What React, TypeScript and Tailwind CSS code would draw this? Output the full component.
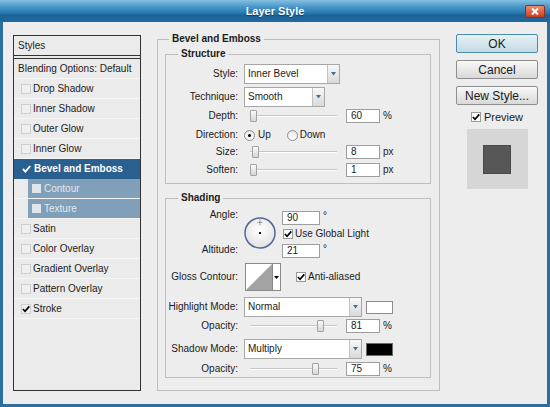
import React from 'react'

type Effect = { name: string; checked?: boolean; selected?: boolean; sub?: boolean }

const EFFECTS: Effect[] = [
  { name: 'Drop Shadow' },
  { name: 'Inner Shadow' },
  { name: 'Outer Glow' },
  { name: 'Inner Glow' },
  { name: 'Bevel and Emboss', checked: true, selected: true },
  { name: 'Contour', sub: true },
  { name: 'Texture', sub: true },
  { name: 'Satin' },
  { name: 'Color Overlay' },
  { name: 'Gradient Overlay' },
  { name: 'Pattern Overlay' },
  { name: 'Stroke', checked: true },
]

function Tick({ color = '#000' }: { color?: string }) {
  return (
    <svg width="9" height="8" viewBox="0 0 9 8">
      <path d="M1 4 L3.4 6.6 L8.2 1" fill="none" stroke={color} strokeWidth="1.9" />
    </svg>
  )
}

function Box({ checked }: { checked?: boolean }) {
  return (
    <span className="flex h-[10px] w-[10px] shrink-0 items-center justify-center border border-[#9a9a9a] bg-white">
      {checked && <Tick />}
    </span>
  )
}

function Arrow() {
  return (
    <svg width="5" height="4" viewBox="0 0 5 4">
      <path d="M0 0 H5 L2.5 3.5 Z" fill="#3f7390" />
    </svg>
  )
}

function Select({ value, width }: { value: string; width: string }) {
  return (
    <div className={`flex h-[20px] border border-[#a7a7a7] bg-white ${width}`}>
      <span className="flex-1 pl-[3px] leading-[18px]">{value}</span>
      <span className="flex w-[12px] items-center justify-center border-l border-[#c2c2c2] bg-gradient-to-b from-[#f8f8f8] to-[#d9d9d9]">
        <Arrow />
      </span>
    </div>
  )
}

function Field({ value, width = 'w-[34px]' }: { value: string; width?: string }) {
  return (
    <div className={`h-[14px] border border-[#9d9d9d] bg-white pl-[4px] leading-[12px] ${width}`}>{value}</div>
  )
}

function Slider({ pos }: { pos: number }) {
  return (
    <div className="relative h-[12px] w-[96px]">
      <div className="absolute left-[6px] right-[3px] top-[5px] h-[2px] border-b border-white bg-[#c6c6c6]" />
      <div
        className="absolute top-0 h-[12px] w-[7px] rounded-[1px] border border-[#a2a2a2] bg-gradient-to-b from-[#fafafa] to-[#d6d6d6]"
        style={{ left: pos }}
      />
    </div>
  )
}

function Label({ children }: { children: React.ReactNode }) {
  return <span className="w-[72px] shrink-0 text-right">{children}</span>
}

function SliderRow({ label, pos, value, unit, className = '' }: { label: string; pos: number; value: string; unit: string; className?: string }) {
  return (
    <div className={`flex h-[14px] items-center gap-[6px] ${className}`}>
      <Label>{label}</Label>
      <Slider pos={pos} />
      <div className="flex items-center gap-[3px]">
        <Field value={value} />
        <span>{unit}</span>
      </div>
    </div>
  )
}

function Radio({ checked }: { checked?: boolean }) {
  return (
    <span className="flex h-[11px] w-[11px] items-center justify-center rounded-full border border-[#8d8d8d] bg-gradient-to-b from-[#e6e6e6] to-white">
      {checked && <span className="h-[3px] w-[3px] rounded-full bg-black" />}
    </span>
  )
}

function EffectRow({ fx }: { fx: Effect }) {
  if (fx.selected) {
    return (
      <div className="flex h-[20px] items-center gap-[3px] border-b border-[#2a6090] bg-[#2a6090] pl-[8px] font-bold text-white">
        <Tick color="#fff" />
        <span>{fx.name}</span>
      </div>
    )
  }
  if (fx.sub) {
    return (
      <div className="flex h-[20px] border-b border-[#f6f6f6]">
        <div className="w-[14px]" />
        <div className="flex flex-1 items-center gap-[3px] bg-[#809fb8] pl-[4px] text-[#e2e9ef]">
          <span className="h-[9px] w-[9px] bg-[#dfe6ec]" />
          <span>{fx.name}</span>
        </div>
      </div>
    )
  }
  return (
    <div className="flex h-[20px] items-center gap-[2px] border-b border-[#f7f7f7] pl-[7px]">
      <span className="flex h-[10px] w-[10px] items-center justify-center border border-[#cfcfcf] bg-[#efefef]">
        {fx.checked && <Tick />}
      </span>
      <span>{fx.name}</span>
    </div>
  )
}

function AngleDial() {
  return (
    <svg width="32" height="32" viewBox="0 0 32 32">
      <defs>
        <radialGradient id="dial" cx="50%" cy="40%" r="60%">
          <stop offset="0" stopColor="#ffffff" />
          <stop offset="1" stopColor="#e2e2e2" />
        </radialGradient>
      </defs>
      <circle cx="16" cy="16" r="15" fill="url(#dial)" stroke="#50669a" strokeWidth="1.5" />
      <rect x="15" y="15" width="2" height="2" fill="#111" />
      <path d="M16 2.5 V8.5 M13.5 5.5 H18.5" stroke="#555" strokeWidth="0.8" strokeDasharray="1 0.6" />
    </svg>
  )
}

function ContourSwatch() {
  return (
    <div className="ml-[1px] flex h-[28px] w-[36px] border border-[#8a8a8a] bg-white">
      <svg width="26" height="26" viewBox="0 0 26 26">
        <polygon points="0,26 26,0 26,26" fill="#a4a4a4" />
      </svg>
      <div className="flex flex-1 items-center justify-center border-l border-[#8a8a8a]">
        <svg width="5" height="3" viewBox="0 0 5 3">
          <path d="M0 0 H5 L2.5 3 Z" fill="#000" />
        </svg>
      </div>
    </div>
  )
}

function Button({ children, primary }: { children: React.ReactNode; primary?: boolean }) {
  return (
    <div
      className={`flex h-[19px] w-[82px] items-center justify-center rounded-[2px] border text-[12px] ${
        primary
          ? 'border-[#4b8bb0] bg-gradient-to-b from-[#e6f1f5] to-[#c3dbe3]'
          : 'border-[#8f8f8f] bg-gradient-to-b from-[#f8f8f8] to-[#d9d9d9]'
      }`}
    >
      {children}
    </div>
  )
}

export default function App() {
  return (
    <div className="flex h-[407px] w-[550px] flex-col overflow-hidden bg-[#2c6e9e] font-['Liberation_Sans',Arial,sans-serif] text-[10px] leading-none text-[#1b1b1b]">
      {/* title bar */}
      <div className="relative flex h-[22px] shrink-0 items-center justify-center bg-[linear-gradient(to_bottom,#86c0e2_0%,#4a98c9_30%,#2c7fb5_55%,#1d6399_70%,#1f6a9f_100%)]">
        <span className="text-[11px] font-bold text-white [text-shadow:0_1px_1px_#0d3a5c]">Layer Style</span>
        <div className="absolute right-[5px] top-[5px] flex h-[13px] w-[20px] items-center justify-center rounded-[2px] border border-[#8d2d1a] bg-gradient-to-b from-[#ef8a6c] to-[#c83c20]">
          <svg width="8" height="7" viewBox="0 0 8 7">
            <path d="M1 0.5 L7 6.5 M7 0.5 L1 6.5" stroke="#fff" strokeWidth="2" />
          </svg>
        </div>
      </div>

      {/* body */}
      <div className="mx-[3px] mb-[3px] flex flex-1 items-start bg-[#ededed] pl-[10px]">
        {/* styles list */}
        <div className="mt-[13px] flex h-[356px] w-[128px] flex-col border border-[#333] bg-[#ebebeb]">
          <div className="h-[20px] border-b border-[#333] pl-[4px] leading-[19px]">Styles</div>
          <div className="h-[2px]" />
          <div className="h-[21px] border-b border-t border-b-[#f7f7f7] border-t-[#333] pl-[4px] leading-[19px]">
            Blending Options: Default
          </div>
          {EFFECTS.map(fx => (
            <EffectRow key={fx.name} fx={fx} />
          ))}
        </div>

        {/* bevel and emboss */}
        <fieldset className="ml-[16px] mt-[11px] h-[358px] w-[283px] border border-[#bebebe] p-0">
          <legend className="ml-[11px] px-[3px] font-bold leading-[12px]">Bevel and Emboss</legend>
          <div className="pl-[7px] pr-[8px] pt-[3px]">
            <fieldset className="h-[136px] border border-[#bebebe] p-0">
              <legend className="ml-[12px] px-[3px] font-bold leading-[12px]">Structure</legend>
              <div className="flex flex-col pt-[4px]">
                <div className="flex items-center gap-[6px]">
                  <Label>Style:</Label>
                  <Select value="Inner Bevel" width="w-[96px]" />
                </div>
                <div className="mt-[3px] flex items-center gap-[6px]">
                  <Label>Technique:</Label>
                  <Select value="Smooth" width="w-[81px]" />
                </div>
                <SliderRow className="mt-[2px]" label="Depth:" pos={6} value="60" unit="%" />
                <div className="mt-[6px] flex h-[12px] items-center gap-[6px]">
                  <Label>Direction:</Label>
                  <div className="flex items-center">
                    <Radio checked />
                    <span className="ml-[3px]">Up</span>
                    <span className="ml-[16px]">
                      <Radio />
                    </span>
                    <span className="ml-[2px]">Down</span>
                  </div>
                </div>
                <SliderRow className="mt-[4px]" label="Size:" pos={8} value="8" unit="px" />
                <SliderRow className="mt-[4px]" label="Soften:" pos={6} value="1" unit="px" />
              </div>
            </fieldset>

            <fieldset className="mt-[8px] h-[186px] border border-[#bebebe] p-0">
              <legend className="ml-[12px] px-[3px] font-bold leading-[12px]">Shading</legend>
              <div className="flex flex-col pt-[7px]">
                <div className="flex items-start">
                  <div className="flex w-[72px] flex-col items-end">
                    <span className="mt-[-2px] leading-[12px]">Angle:</span>
                    <span className="mt-[23px] leading-[12px]">Altitude:</span>
                  </div>
                  <div className="ml-[6px] mt-[6px]">
                    <AngleDial />
                  </div>
                  <div className="ml-[6px] flex flex-col">
                    <div className="flex items-start gap-[3px]">
                      <Field value="90" width="w-[38px]" />
                      <span>°</span>
                    </div>
                    <div className="ml-[1px] mt-[4px] flex items-center gap-[2px]">
                      <Box checked />
                      <span>Use Global Light</span>
                    </div>
                    <div className="mt-[5px] flex items-start gap-[3px]">
                      <Field value="21" width="w-[38px]" />
                      <span>°</span>
                    </div>
                  </div>
                </div>

                <div className="mt-[5px] flex items-center gap-[6px]">
                  <Label>Gloss Contour:</Label>
                  <ContourSwatch />
                  <div className="ml-[9px] flex items-center gap-[2px]">
                    <Box checked />
                    <span>Anti-aliased</span>
                  </div>
                </div>

                <div className="mt-[6px] flex items-center gap-[6px]">
                  <Label>Highlight Mode:</Label>
                  <Select value="Normal" width="w-[118px]" />
                  <div className="ml-[-2px] h-[13px] w-[27px] border border-[#8c8c8c] bg-white" />
                </div>
                <SliderRow className="mt-[2px]" label="Opacity:" pos={73} value="81" unit="%" />
                <div className="mt-[6px] flex items-center gap-[6px]">
                  <Label>Shadow Mode:</Label>
                  <Select value="Multiply" width="w-[118px]" />
                  <div className="ml-[-2px] h-[13px] w-[27px] border border-[#6a6a6a] bg-black" />
                </div>
                <SliderRow className="mt-[3px]" label="Opacity:" pos={68} value="75" unit="%" />
              </div>
            </fieldset>
          </div>
        </fieldset>

        {/* buttons */}
        <div className="ml-[16px] mt-[12px] flex w-[82px] flex-col items-center gap-[7px]">
          <Button primary>OK</Button>
          <Button>Cancel</Button>
          <Button>New Style...</Button>
          <div className="flex h-[10px] items-center gap-[3px] text-[11px]">
            <Box checked />
            <span>Preview</span>
          </div>
          <div className="flex h-[60px] w-[61px] items-center justify-center bg-[#d6d6d6]">
            <div className="h-[29px] w-[28px] border border-[#4a4a4a] bg-[#575757]" />
          </div>
        </div>
      </div>
    </div>
  )
}
